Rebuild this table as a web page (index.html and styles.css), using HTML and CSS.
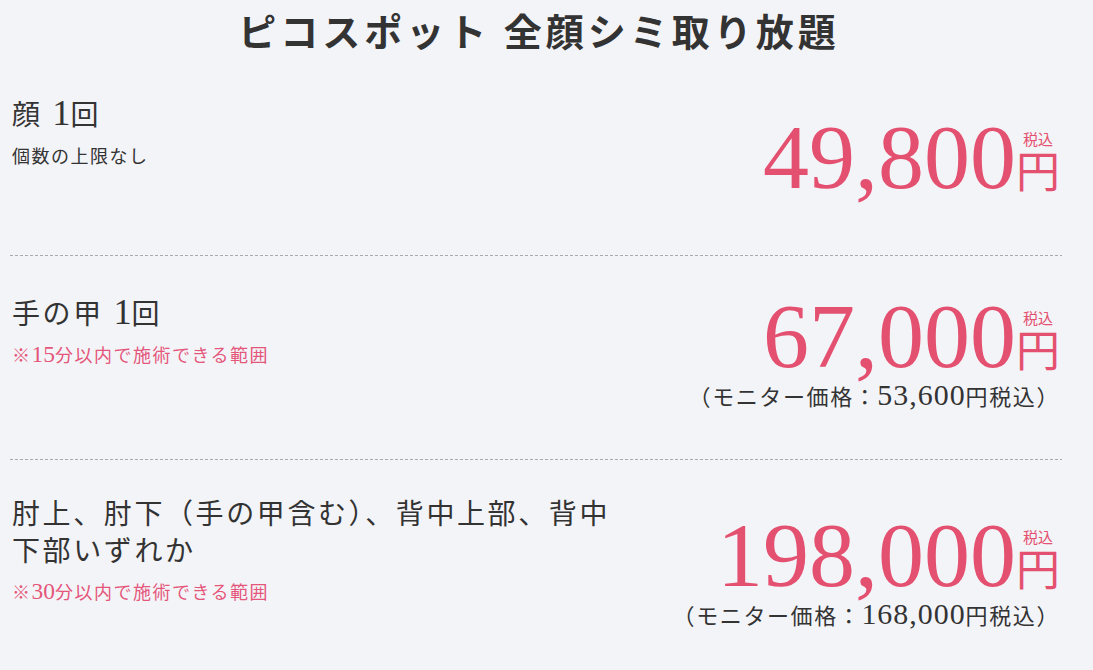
FILE: index.html
```html
<!DOCTYPE html>
<html lang="ja">
<head>
<meta charset="utf-8">
<title>ピコスポット 全顔シミ取り放題</title>
<link rel="stylesheet" href="styles.css">
</head>
<body>
<div class="page">
  <h1 class="title">ピコスポット 全顔シミ取り放題</h1>
  <div class="menu">
    <div class="item item--face">
      <div class="info">
        <p class="name">顔 <span class="fig">1</span>回</p>
        <p class="note">個数の上限なし</p>
      </div>
      <div class="price-box">
        <div class="price"><span class="num">49,800</span><span class="unit"><span class="tax">税込</span><span class="yen">円</span></span></div>
      </div>
    </div>
    <div class="item item--hand">
      <div class="info">
        <p class="name">手の甲 <span class="fig">1</span>回</p>
        <p class="note note--pink">※<span class="fig">15</span>分以内で施術できる範囲</p>
      </div>
      <div class="price-box">
        <div class="price"><span class="num">67,000</span><span class="unit"><span class="tax">税込</span><span class="yen">円</span></span></div>
        <p class="monitor">（モニター価格：<span class="fig">53,600</span>円税込）</p>
      </div>
    </div>
    <div class="item item--body">
      <div class="info">
        <p class="name">肘上、肘下（手の甲含む）、背中上部、背中下部いずれか</p>
        <p class="note note--pink">※<span class="fig">30</span>分以内で施術できる範囲</p>
      </div>
      <div class="price-box">
        <div class="price"><span class="num">198,000</span><span class="unit"><span class="tax">税込</span><span class="yen">円</span></span></div>
        <p class="monitor">（モニター価格：<span class="fig">168,000</span>円税込）</p>
      </div>
    </div>
  </div>
</div>
</body>
</html>
```
FILE: styles.css
```css
html, body {
  margin: 0;
  padding: 0;
  background: #f3f4f8;
}

body {
  font-family: "Liberation Serif", "Noto Sans CJK JP", serif;
  color: #333333;
}

.page {
  margin: 0 31px 0 10px;
}

.title {
  margin: 0;
  padding-top: 11px;
  font-size: 38px;
  line-height: 1.2;
  font-weight: 700;
  letter-spacing: 4px;
  text-align: center;
  text-indent: 6px;
  color: #333333;
}

.menu {
  display: flex;
  flex-direction: column;
}

.item {
  display: flex;
  justify-content: space-between;
  align-items: flex-start;
  padding: 40px 2px 53px;
  background: repeating-linear-gradient(to right, #a9a9a9 0 3px, transparent 3px 5px) left bottom / 100% 1px no-repeat;
}

.item--hand {
  padding-bottom: 47px;
}

.item--body {
  padding-top: 36px;
  padding-bottom: 40px;
  background: none;
}

.info {
  max-width: 625px;
}

.fig {
  font-family: "Liberation Serif", serif;
  font-size: 1.3em;
  line-height: 0;
  letter-spacing: 0;
}

.name {
  margin: 0;
  font-size: 28px;
  line-height: 37px;
  letter-spacing: 2.6px;
  color: #333333;
}

.note {
  margin: 10px 0 0;
  font-size: 18px;
  line-height: 27px;
  letter-spacing: 1.5px;
  color: #333333;
}

.note--pink {
  color: #e4567a;
}

.price-box {
  display: flex;
  flex-direction: column;
  align-items: flex-end;
}

.item--face .price-box {
  margin-top: 14px;
}

.item--hand .price-box {
  margin-top: -6px;
}

.item--body .price-box {
  margin-top: 13px;
}

.price {
  font-family: "Liberation Serif", serif;
  font-size: 92px;
  line-height: 1;
  color: #e4506f;
  text-align: right;
  white-space: nowrap;
}

.unit {
  display: inline-block;
  text-align: center;
  font-family: "Noto Sans CJK JP", sans-serif;
}

.tax {
  display: block;
  margin-bottom: 2px;
  font-size: 15px;
  line-height: 15px;
}

.yen {
  display: block;
  font-size: 44px;
  line-height: 42px;
}

.monitor {
  margin: 1px 0 0;
  font-size: 22px;
  line-height: 30px;
  letter-spacing: 1.6px;
  color: #333333;
  white-space: nowrap;
}

.monitor .fig {
  font-size: 1.36em;
  letter-spacing: 1px;
}
```
